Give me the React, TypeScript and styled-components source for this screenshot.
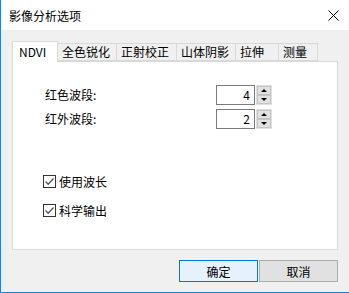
import React from "react";
import styled, { createGlobalStyle } from "styled-components";

const GlobalStyle = createGlobalStyle`
  html, body {
    margin: 0;
    padding: 0;
    background: #ffffff;
  }
  * {
    box-sizing: border-box;
  }
`;

const Window = styled.div`
  width: 349px;
  height: 293px;
  display: flex;
  flex-direction: column;
  background: #f0f0f0;
  border-left: 1px solid #1883d7;
  border-bottom: 1px solid #1883d7;
  font-family: "Noto Sans CJK SC", "Noto Sans", sans-serif;
  font-size: 12px;
  color: #000;
  overflow: hidden;
`;

const TitleBar = styled.div`
  height: 30px;
  display: flex;
  align-items: center;
  justify-content: space-between;
  background: #ffffff;
  padding: 0 10px 0 8px;
  font-size: 12px;
`;

const CloseButton = styled.div`
  width: 12px;
  height: 12px;
  display: flex;
  align-items: center;
  justify-content: center;
`;

const Body = styled.div`
  flex: 1;
  display: flex;
  flex-direction: column;
  padding: 11px 11px 0 11px;
`;

const TabRow = styled.div`
  display: flex;
  align-items: flex-end;
  height: 20px;
  padding-left: 1px;
  position: relative;
  z-index: 1;
`;

const Tab = styled.div<{ $w: number; $active?: boolean }>`
  width: ${(p) => p.$w}px;
  height: ${(p) => (p.$active ? 21 : 18)}px;
  margin-bottom: ${(p) => (p.$active ? -1 : 0)}px;
  display: flex;
  align-items: center;
  padding-left: ${(p) => (p.$active ? 6 : 4)}px;
  background: ${(p) => (p.$active ? "#ffffff" : "#f0f0f0")};
  border: 1px solid #d9d9d9;
  border-bottom: ${(p) => (p.$active ? "none" : "1px solid #d9d9d9")};
  margin-left: -1px;
  white-space: nowrap;
  line-height: 1;
`;

const Panel = styled.div`
  width: 326px;
  height: 189px;
  background: #ffffff;
  border: 1px solid #d9d9d9;
  display: flex;
  flex-direction: column;
  padding: 23px 0 0 32px;
`;

const FieldGrid = styled.div`
  display: grid;
  grid-template-columns: 171px auto;
  row-gap: 4px;
  align-items: center;
`;

const FieldLabel = styled.div`
  height: 20px;
  line-height: 20px;
`;

const Spin = styled.div`
  display: flex;
  gap: 1px;
`;

const SpinInput = styled.div`
  width: 39px;
  height: 20px;
  border: 1px solid #7a7a7a;
  background: #fff;
  text-align: right;
  padding-right: 4px;
  line-height: 18px;
`;

const SpinButtons = styled.div`
  width: 16px;
  height: 20px;
  display: flex;
  flex-direction: column;
  background: #e6e6e6;
  border: 1px solid #e0e0e0;
`;

const SpinArrow = styled.div<{ $down?: boolean }>`
  flex: 1;
  display: flex;
  align-items: center;
  justify-content: center;
  background: #e1e1e1;
  border: 1px solid #c4c4c4;
  &::after {
    content: "";
    border-left: 3px solid transparent;
    border-right: 3px solid transparent;
    ${(p) =>
      p.$down
        ? "border-top: 3px solid #000;"
        : "border-bottom: 3px solid #000;"}
  }
`;

const CheckList = styled.div`
  display: flex;
  flex-direction: column;
  gap: 11px;
  margin-top: 43px;
  margin-left: -2px;
`;

const CheckRow = styled.label`
  display: flex;
  align-items: center;
  gap: 3px;
  height: 18px;
`;

const Box = styled.span`
  width: 13px;
  height: 13px;
  border: 1px solid #333333;
  background: #fff;
  display: flex;
  align-items: center;
  justify-content: center;
`;

const ButtonRow = styled.div`
  display: flex;
  justify-content: flex-end;
  gap: 1px;
  margin-top: 10px;
  padding-right: 0;
`;

const Button = styled.div<{ $primary?: boolean }>`
  width: 79px;
  height: 22px;
  display: flex;
  align-items: center;
  justify-content: center;
  background: ${(p) => (p.$primary ? "#e5f1fb" : "#e1e1e1")};
  border: 1px solid ${(p) => (p.$primary ? "#0078d7" : "#adadad")};
`;

const tabs: [string, number][] = [
  ["NDVI", 46],
  ["全色锐化", 60],
  ["正射校正", 61],
  ["山体阴影", 60],
  ["拉伸", 44],
  ["测量", 40],
];

const Check = () => (
  <Box>
    <svg width="11" height="11" viewBox="0 0 11 11">
      <path d="M1.5 5.5 L4.2 8.2 L9.5 2.5" fill="none" stroke="#555" strokeWidth="1.3" />
    </svg>
  </Box>
);

const SpinBox = ({ value }: { value: number }) => (
  <Spin>
    <SpinInput>{value}</SpinInput>
    <SpinButtons>
      <SpinArrow />
      <SpinArrow $down />
    </SpinButtons>
  </Spin>
);

export default function App() {
  return (
    <>
      <GlobalStyle />
      <Window>
        <TitleBar>
          <span>影像分析选项</span>
          <CloseButton>
            <svg width="11" height="11" viewBox="0 0 11 11">
              <path d="M0.5 0.5 L10.5 10.5 M10.5 0.5 L0.5 10.5" stroke="#000" strokeWidth="1" />
            </svg>
          </CloseButton>
        </TitleBar>
        <Body>
          <TabRow>
            {tabs.map(([name, w], i) => (
              <Tab key={name} $w={w} $active={i === 0}>
                {name}
              </Tab>
            ))}
          </TabRow>
          <Panel>
            <FieldGrid>
              <FieldLabel>红色波段:</FieldLabel>
              <SpinBox value={4} />
              <FieldLabel>红外波段:</FieldLabel>
              <SpinBox value={2} />
            </FieldGrid>
            <CheckList>
              <CheckRow>
                <Check />
                使用波长
              </CheckRow>
              <CheckRow>
                <Check />
                科学输出
              </CheckRow>
            </CheckList>
          </Panel>
          <ButtonRow>
            <Button $primary>确定</Button>
            <Button>取消</Button>
          </ButtonRow>
        </Body>
      </Window>
    </>
  );
}
